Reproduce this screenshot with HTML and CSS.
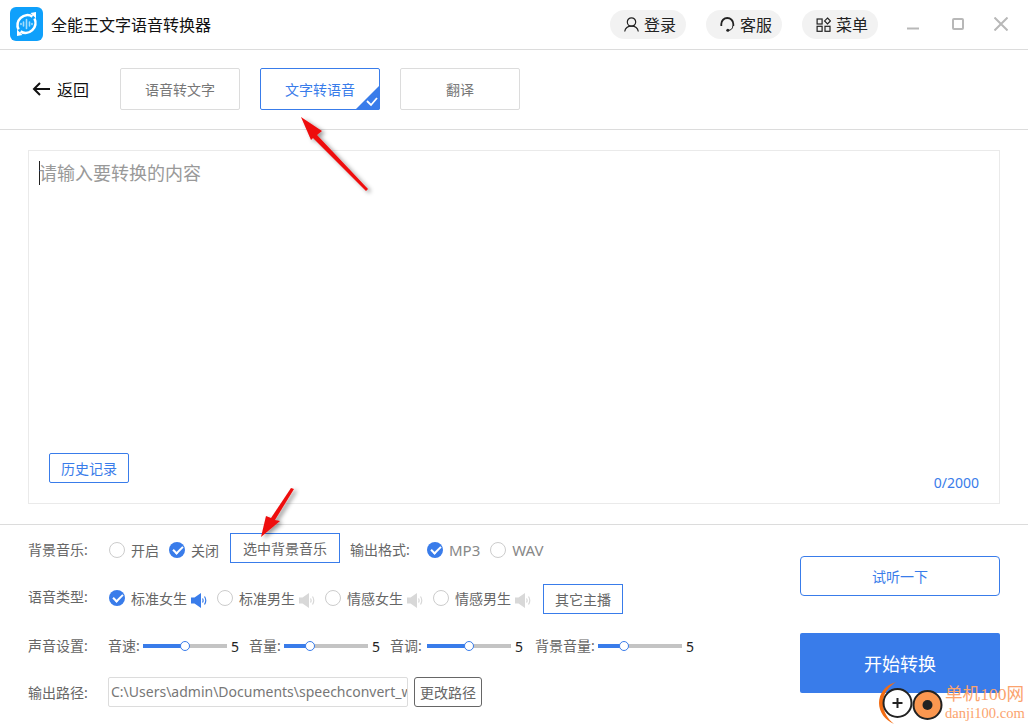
FILE: index.html
```html
<!DOCTYPE html>
<html lang="zh-CN">
<head>
<meta charset="utf-8">
<title>全能王文字语音转换器</title>
<link rel="stylesheet" href="styles.css">
</head>
<body>
<div class="app">
  <header class="titlebar">
    <svg class="logo" viewBox="0 0 34 34"><rect width="33" height="34" rx="6" fill="#0fa0fb"/><path d="M8.500 22.500a10 10 0 0 1 14-13" fill="none" stroke="#fff" stroke-width="2.600"/><path d="M24.500 11.500a10 10 0 0 1-14 13" fill="none" stroke="#fff" stroke-width="2.600"/><path d="M20.500 6l5.500-1v6.500zM12.500 28l-5.500 1v-6.500z" fill="#fff"/><path d="M11 16.500v1M13.500 15v4M16.500 12.500v9M19.500 15v4M22 16.500v1" stroke="#a5defc" stroke-width="1.600" stroke-linecap="round"/></svg>
    <h1 class="apptitle">全能王文字语音转换器</h1>
    <div class="topactions">
      <button class="pill"><svg class="pill-icon" viewBox="0 0 15 15"><circle cx="7.500" cy="5" r="4.200" fill="none" stroke="#222" stroke-width="1.200"/><path d="M.7 14.500c.5-3 3-5.300 6.800-5.300s6.300 2.300 6.800 5.300" fill="none" stroke="#222" stroke-width="1.200"/></svg>登录</button>
      <button class="pill"><svg class="pill-icon" viewBox="0 0 15 15"><path d="M1.300 9V7a6 6 0 0 1 12 0v2" fill="none" stroke="#222" stroke-width="1.800"/><circle cx="7.800" cy="13.300" r="1.500" fill="#222"/><path d="M12.800 9c0 2.800-2 4.300-4.500 4.300" fill="none" stroke="#222" stroke-width="1"/></svg>客服</button>
      <button class="pill"><svg class="pill-icon" viewBox="0 0 15 15"><g fill="none" stroke="#222" stroke-width="1.200"><rect x="1.100" y="2" width="5" height="5"/><rect x="1.100" y="9.300" width="5" height="5"/><rect x="9" y="9.300" width="5" height="5"/><path d="M11.500 1l2.900 2.900-2.900 2.900-2.900-2.900z"/></g></svg>菜单</button>
    </div>
    <div class="winctl">
      <svg viewBox="0 0 12 12" class="win win-min"><path d="M0 10.500h12" stroke="#b8b8b8" stroke-width="2"/></svg>
      <svg viewBox="0 0 12 12" class="win win-max"><rect x="1" y="1" width="10" height="10" rx="1" fill="none" stroke="#b8b8b8" stroke-width="2"/></svg>
      <svg viewBox="0 0 14 14" class="win win-close"><path d="M.5.500l13 13M13.500.500l-13 13" stroke="#b8b8b8" stroke-width="2"/></svg>
    </div>
  </header>

  <nav class="tabbar">
    <a class="back"><svg class="back-arrow" viewBox="0 0 18 14"><path d="M18 7H2M8 1L2 7l6 6" fill="none" stroke="#111" stroke-width="2"/></svg>返回</a>
    <button class="tab">语音转文字</button>
    <button class="tab tab-active">文字转语音<svg class="tab-check" viewBox="0 0 25 25"><path d="M25 0v23a2 2 0 0 1-2 2H0z" fill="#397cea"/><path d="M12 16l4 4 6-7" fill="none" stroke="#fff" stroke-width="1.800"/></svg></button>
    <button class="tab">翻译</button>
  </nav>

  <main class="editor-wrap">
    <section class="editor">
      <div class="placeholder"><span class="caret"></span>请输入要转换的内容</div>
      <div class="editor-foot">
        <button class="history">历史记录</button>
        <span class="counter">0/2000</span>
      </div>
    </section>
  </main>

  <section class="settings">
    <div class="options">
      <div class="row row-music">
        <span class="label">背景音乐:</span>
        <span class="radio"><i class="dot"></i>开启</span>
        <span class="radio"><i class="dot on"></i>关闭</span>
        <button class="outline wide">选中背景音乐</button>
        <span class="label label-inline">输出格式:</span>
        <span class="radio latin"><i class="dot on"></i>MP3</span>
        <span class="radio latin"><i class="dot"></i>WAV</span>
      </div>
      <div class="row row-voice">
        <span class="label">语音类型:</span>
        <span class="radio"><i class="dot on"></i>标准女生<svg class="spk spk-on" viewBox="0 0 16 15"><path d="M0 4.500h3.500L10 0v15l-6.500-4.500H0z"/><path class="wave" d="M11.500 5.500c.8 1.300.8 2.700 0 4M13.500 3.500c1.600 2.500 1.600 5.500 0 8"/></svg></span>
        <span class="radio"><i class="dot"></i>标准男生<svg class="spk" viewBox="0 0 16 15"><path d="M0 4.500h3.500L10 0v15l-6.500-4.500H0z"/><path class="wave" d="M11.500 5.500c.8 1.300.8 2.700 0 4M13.500 3.500c1.600 2.500 1.600 5.500 0 8"/></svg></span>
        <span class="radio"><i class="dot"></i>情感女生<svg class="spk" viewBox="0 0 16 15"><path d="M0 4.500h3.500L10 0v15l-6.500-4.500H0z"/><path class="wave" d="M11.500 5.500c.8 1.300.8 2.700 0 4M13.500 3.500c1.600 2.500 1.600 5.500 0 8"/></svg></span>
        <span class="radio"><i class="dot"></i>情感男生<svg class="spk" viewBox="0 0 16 15"><path d="M0 4.500h3.500L10 0v15l-6.500-4.500H0z"/><path class="wave" d="M11.500 5.500c.8 1.300.8 2.700 0 4M13.500 3.500c1.600 2.500 1.600 5.500 0 8"/></svg></span>
        <button class="outline narrow">其它主播</button>
      </div>
      <div class="row row-sound">
        <span class="label">声音设置:</span>
        <span class="sl-label sl-35">音速:</span><span class="slider"><i class="fill half"></i><i class="knob"></i></span><span class="val">5</span>
        <span class="sl-label sl-35">音量:</span><span class="slider"><i class="fill third"></i><i class="knob"></i></span><span class="val">5</span>
        <span class="sl-label sl-37">音调:</span><span class="slider"><i class="fill half"></i><i class="knob"></i></span><span class="val val-wide">5</span>
        <span class="sl-label sl-63">背景音量:</span><span class="slider"><i class="fill third"></i><i class="knob"></i></span><span class="val">5</span>
      </div>
      <div class="row row-path">
        <span class="label">输出路径:</span>
        <span class="pathbox">C:\Users\admin\Documents\speechconvert_win</span>
        <button class="change">更改路径</button>
      </div>
    </div>
    <div class="cta">
      <button class="try">试听一下</button>
      <button class="start">开始转换</button>
    </div>
  </section>

  <svg class="arrow arrow-a" viewBox="0 0 80 90"><defs><filter id="sh" x="-30%" y="-30%" width="160%" height="160%"><feDropShadow dx="3" dy="2" stdDeviation="2" flood-color="#000" flood-opacity=".4"/></filter></defs><path d="M6 7l21 14-5 4 51 54-2 2-53-53-2 2z" fill="#ee0b0b" filter="url(#sh)"/></svg>
  <svg class="arrow arrow-b" viewBox="0 0 45 60"><path d="M6 55l5-21 5 2L36 6l3 1-19 31 5 1z" fill="#ee0b0b" filter="url(#sh)"/></svg>

  <div class="watermark">
    <svg class="wm-icon" viewBox="0 0 64 42"><path d="M17 0C6 3 0 12 0 21s6 17 15 21c-6-5-11-12-11-21S9 5 17 0z" fill="#f36c12"/><circle cx="18.500" cy="21" r="14" fill="#fff" stroke="#222" stroke-width="2"/><path d="M18.500 16v10M13.500 21h10" stroke="#222" stroke-width="2"/><circle cx="48.500" cy="23" r="14" fill="#fb9750" stroke="#222" stroke-width="2"/><circle cx="48.500" cy="23" r="5" fill="#222"/></svg>
    <div class="wm-text"><span class="wm-cn">单机100网</span><span class="wm-en">danji100.com</span></div>
  </div>
</div>
</body>
</html>
```
FILE: styles.css
```css
* { box-sizing: border-box; }
html, body { margin: 0; padding: 0; }
body { font-family: "Noto Sans", "Noto Sans CJK SC", sans-serif; background: #fff; color: #666; }
button { font-family: inherit; cursor: pointer; background: #fff; padding: 0; }
i { display: block; font-style: normal; }

.app { position: relative; width: 1028px; height: 724px; overflow: hidden; display: flex; flex-direction: column; }

.titlebar { height: 50px; flex: none; display: flex; align-items: center; padding: 0 20px 1px 10px; border-bottom: 1px solid #dcdcdc; }
.logo { width: 34px; height: 34px; flex: none; }
.apptitle { margin: 0 0 0 7px; font-size: 16px; font-weight: 400; color: #111; }
.topactions { margin-left: auto; display: flex; gap: 20px; }
.pill { height: 29px; width: 76px; border: 0; border-radius: 15px; background: #f2f2f2; display: flex; align-items: center; gap: 5px; padding-left: 14px; font-size: 16px; color: #222; }
.pill-icon { width: 15px; height: 15px; flex: none; }
.winctl { display: flex; align-items: center; margin-left: 29px; }
.win { display: block; }
.win-min { width: 12px; height: 12px; }
.win-max { width: 12px; height: 12px; margin-left: 33px; }
.win-close { width: 14px; height: 14px; margin-left: 30px; }

.tabbar { height: 80px; flex: none; display: flex; align-items: center; border-bottom: 1px solid #dcdcdc; padding: 0 0 2px 32px; gap: 20px; }
.back { display: flex; align-items: center; gap: 7px; font-size: 16px; color: #111; width: 68px; }
.back-arrow { width: 18px; height: 14px; flex: none; }
.tab { position: relative; width: 120px; height: 42px; border: 1px solid #dcdcdc; border-radius: 2px; font-size: 14px; color: #777; }
.tab-active { color: #397cea; border-color: #397cea; }
.tab-check { position: absolute; right: -1px; bottom: -1px; width: 25px; height: 25px; }

.editor-wrap { flex: none; padding: 20px 28px; height: 395px; border-bottom: 1px solid #dcdcdc; }
.editor { height: 354px; border: 1px solid #eaeaea; display: flex; flex-direction: column; justify-content: space-between; padding: 9px 20px 10px 10px; }
.placeholder { font-size: 18px; color: #999; line-height: 26px; display: flex; align-items: center; }
.caret { width: 1px; height: 24px; background: #222; margin-right: -1px; }
.editor-foot { display: flex; justify-content: space-between; align-items: flex-end; padding-left: 10px; }
.history { width: 80px; height: 30px; border: 1px solid #397cea; border-radius: 2px; font-size: 14px; color: #397cea; margin-bottom: 10px; }
.counter { font-size: 14px; color: #397cea; line-height: 20px; }

.settings { flex: 1; display: flex; padding: 0 28px; }
.options { width: 772px; flex: none; font-size: 14px; }
.row { display: flex; align-items: center; color: #666; }
.row-music { height: 34px; margin-top: 8px; }
.row-voice { height: 28px; margin-top: 17px; }
.row-sound { height: 20px; margin-top: 24px; }
.row-path { height: 30px; margin-top: 21px; }
.label { width: 81px; flex: none; margin-bottom: 2px; }
.row-voice .label { margin-bottom: 4px; }
.row-sound .label { width: 80px; margin-bottom: 3px; }
.row-path .label { width: 80px; margin-bottom: 0; }
.label-inline { width: 77px; margin-left: 10px; }
.radio { display: flex; align-items: center; gap: 6px; margin-right: 10px; }
.latin { font-size: 15px; color: #888; }
.dot { width: 16px; height: 16px; border-radius: 50%; border: 1px solid #ccc; background: #fff; flex: none; position: relative; }
.dot.on { border: 0; background: #397cea; }
.dot.on::after { content: ""; position: absolute; left: 4px; top: 4px; width: 8px; height: 4px; border-left: 2px solid #fff; border-bottom: 2px solid #fff; transform: rotate(-45deg); }
.spk { width: 16px; height: 15px; margin: 4px 0 0 -2px; fill: #d8d8d8; stroke: none; }
.spk-on { fill: #397cea; }
.wave { fill: none; stroke: #d8d8d8; stroke-width: 1.200; }
.spk-on .wave { stroke: #397cea; }
.outline { align-self: flex-start; border: 1px solid #397cea; background: #fff; font-size: 14px; color: #666; height: 30px; flex: none; }
.wide { width: 110px; margin-left: 1px; }
.narrow { width: 80px; margin-left: 2px; }
.sl-label { flex: none; margin-bottom: 2px; }
.sl-35 { width: 35px; }
.sl-37 { width: 37px; }
.sl-63 { width: 63px; }
.slider { position: relative; display: block; flex: none; width: 84px; height: 4px; background: #c4c4c4; }
.fill { height: 4px; background: #397cea; }
.fill.half { width: 42px; }
.fill.third { width: 26px; }
.knob { position: absolute; top: -3px; width: 10px; height: 10px; border-radius: 50%; background: #fff; border: 1px solid #397cea; }
.half + .knob { left: 37px; }
.third + .knob { left: 21px; }
.val { width: 22px; flex: none; padding-left: 4px; font-size: 14px; color: #222; }
.val-wide { width: 24px; }
.pathbox { width: 300px; height: 30px; flex: none; border: 1px solid #dcdcdc; border-radius: 2px; padding-left: 2px; font-size: 14px; line-height: 28px; color: #777; white-space: nowrap; overflow: hidden; }
.change { width: 68px; height: 30px; margin-left: 6px; border: 1px solid #666; border-radius: 3px; font-size: 14px; color: #666; }

.cta { width: 200px; flex: none; display: flex; flex-direction: column; gap: 37px; padding-top: 31px; }
.try { height: 40px; flex: none; border: 1px solid #397cea; border-radius: 4px; font-size: 14px; color: #397cea; }
.start { height: 60px; flex: none; border: 0; border-radius: 2px; background: #397cea; color: #fff; font-size: 18px; }

.arrow { position: absolute; pointer-events: none; }
.arrow-a { left: 295px; top: 110px; width: 80px; height: 90px; }
.arrow-b { left: 255px; top: 482px; width: 45px; height: 60px; }

.watermark { position: absolute; left: 879px; top: 682px; display: flex; gap: 2px; white-space: nowrap; }
.wm-icon { width: 64px; height: 42px; flex: none; }
.wm-text { display: flex; flex-direction: column; padding-top: 2px; color: #fba36e; font-family: "Liberation Serif", "Noto Sans CJK SC", serif; }
.wm-cn { font-size: 17.600px; line-height: 21px; }
.wm-en { font-size: 14.600px; line-height: 16px; }
```
